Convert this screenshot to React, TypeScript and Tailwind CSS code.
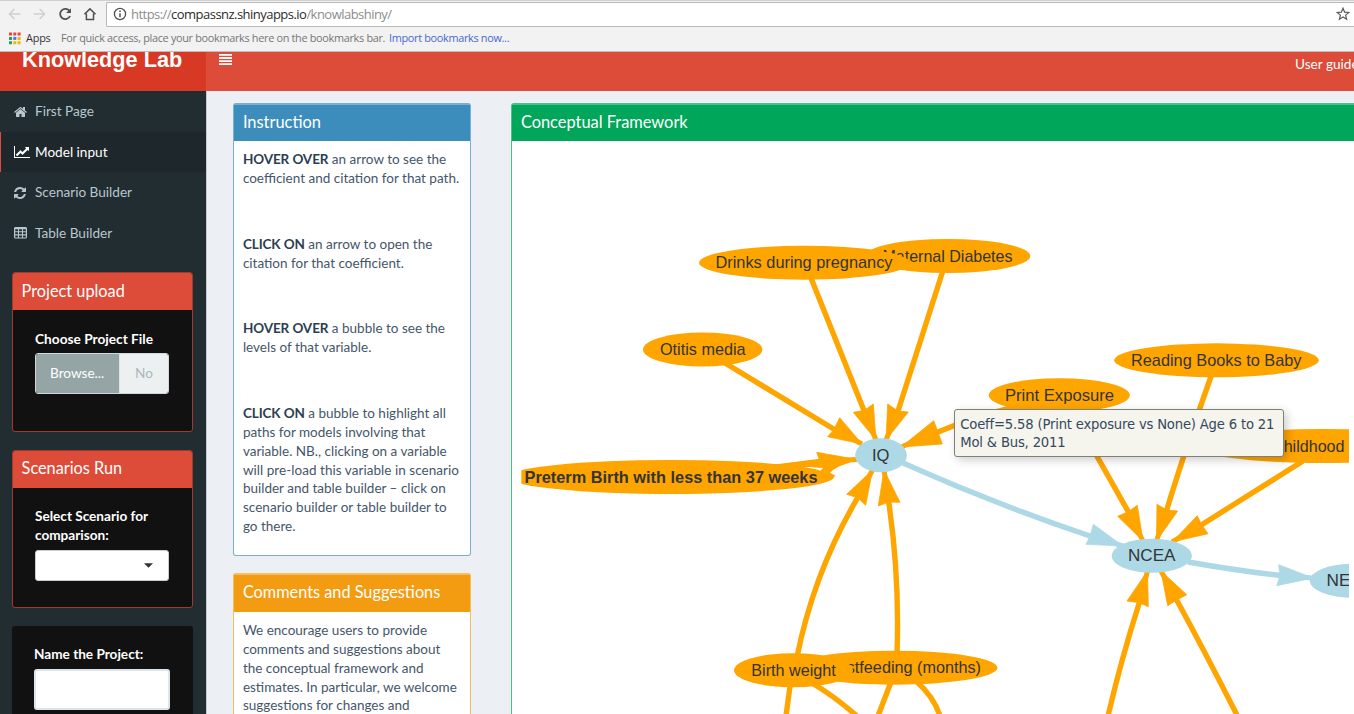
import React from "react";

type Pt = [number, number];

const ORANGE = "#ffa500";
const BLUE = "#add8e6";

const HOME =
  "M1408 992v480q0 26-19 45t-45 19h-384v-384h-256v384h-384q-26 0-45-19t-19-45v-480q0-1 .5-3t.5-3l575-474 575 474q1 2 1 6zm223-69l-62 74q-8 9-21 11h-3q-13 0-21-7l-692-577-692 577q-12 8-24 7-13-2-21-11l-62-74q-8-10-7-23.5t11-21.5l719-599q32-26 76-26t76 26l244 204v-195q0-14 9-23t23-9h192q14 0 23 9t9 23v408l219 182q10 8 11 21.5t-7 23.5z";
const CHART =
  "M2048 1536v128h-2048v-1536h128v1408h1920zm-128-1248v435q0 21-19.5 29.5t-35.5-7.5l-121-121-633 633q-10 10-23 10t-23-10l-233-233-416 416-192-192 585-585q10-10 23-10t23 10l233 233 464-464-121-121q-16-16-7.5-35.5t29.5-19.5h435q14 0 23 9t9 23z";
const REFRESH =
  "M1639 1056q0 5-1 7-64 268-268 434.5t-478 166.5q-146 0-282.5-55t-243.5-157l-129 129q-19 19-45 19t-45-19-19-45v-448q0-26 19-45t45-19h448q26 0 45 19t19 45-19 45l-137 137q71 66 161 102t187 36q134 0 250-65t186-179q11-17 53-117 8-23 30-23h192q13 0 22.5 9.5t9.5 22.5zm25-800v448q0 26-19 45t-45 19h-448q-26 0-45-19t-19-45 19-45l138-138q-148-137-349-137-134 0-250 65t-186 179q-11 17-53 117-8 23-30 23h-199q-13 0-22.5-9.5t-9.5-22.5v-7q65-268 270-434.5t480-166.5q146 0 284 55.5t245 156.5l130-129q19-19 45-19t45 19 19 45z";

function TableIcon() {
  return (
    <svg viewBox="0 0 13 12" className="h-[12px] w-[13px]" fill="none" stroke="currentColor">
      <rect x="0.6" y="0.6" width="11.8" height="10.4" rx="1" strokeWidth="1.2" />
      <path d="M0.6 1.4h11.8" strokeWidth="1.7" />
      <path d="M0.6 4.8h11.8M0.6 7.9h11.8M4.5 1v10M8.5 1v10" strokeWidth="1.1" />
    </svg>
  );
}

function NavItem({ icon, label, active }: { icon: React.ReactNode; label: string; active?: boolean }) {
  return (
    <li
      className={
        active
          ? "flex h-[40.5px] items-center border-l border-[#dd4b39] bg-[#1e282c] pt-[0.6px] pl-[13px] text-white"
          : "flex h-[40.5px] items-center border-l border-transparent pt-[0.6px] pl-[13px] text-[#b8c7ce]"
      }
    >
      <span className="flex w-[21px] items-center">{icon}</span>
      <span>{label}</span>
    </li>
  );
}

function Chrome() {
  return (
    <div className="h-[52px] shrink-0 border-b border-[#bdbdbd] bg-[#f2f2f2] font-['Open_Sans','Noto_Sans',sans-serif]">
      <div className="flex h-[26px] items-center border-t border-[#d0d0d0]">
        <svg viewBox="0 0 107 26" className="h-[26px] w-[106px] shrink-0" fill="none" strokeWidth="1.5">
          <path d="M20.5 13H9.5M14.5 8l-5 5 5 5M34 13h11M40 8l5 5-5 5" stroke="#cfcfcf" />
          <path d="M70.3 10.2a5.2 5.2 0 1 0 .4 4.8" stroke="#505050" strokeWidth="1.8" />
          <path d="M71.6 7.2v4.9h-4.9z" fill="#505050" />
          <path d="M85.2 13.2l5.6-5.4 5.6 5.4M87.2 12.4v6.1h7.2v-6.1" stroke="#505050" />
        </svg>
        <div className="mt-[1px] flex h-[25px] flex-1 items-center rounded-l-[2px] border border-r-0 border-[#b9b9b9] bg-white pl-[6px]">
          <svg viewBox="0 0 14 14" className="h-[14px] w-[14px]" fill="none" stroke="#505050">
            <circle cx="7" cy="7" r="5.6" strokeWidth="1.3" />
            <path d="M7 6.2v4.1M7 3.6v1.5" strokeWidth="1.5" />
          </svg>
          <span className="ml-[4px] whitespace-nowrap text-[13px] leading-[20px] tracking-[-0.53px] text-[#8c8c8c]">
            https://<span className="text-[#2b2b2b]">compassnz.shinyapps.io</span>/knowlabshiny/
          </span>
          <svg viewBox="0 0 14 14" className="mr-[4px] ml-auto h-[14px] w-[14px]" fill="none" stroke="#5a5a5a" strokeWidth="1.2">
            <path d="M7 1.2l1.6 3.9 4.2.3-3.2 2.7 1 4.1L7 10l-3.6 2.2 1-4.1L1.2 5.4l4.2-.3z" />
          </svg>
        </div>
      </div>
      <div className="flex h-[24px] items-center pl-[8px] text-[10.9px] tracking-[-0.32px]">
        <svg viewBox="0 0 13 13" className="h-[13px] w-[13px]">
          <path d="M1 0.5h3v3h-3zM5.3 0.5h3v3h-3zM9.6 0.5h3v3h-3z" fill="#e8453c" />
          <path d="M1 4.9h3v3h-3zM1 9.3h3v3h-3z" fill="#2aa055" />
          <path d="M5.3 4.9h3v3h-3z" fill="#3b7ded" />
          <path d="M9.6 4.9h3v3h-3zM5.3 9.3h3v3h-3zM9.6 9.3h3v3h-3z" fill="#f4b400" />
        </svg>
        <span className="ml-[5px] w-[35px] tracking-[-0.2px] text-[#333]">Apps</span>
        <span className="w-[328px] whitespace-nowrap text-[#757575]">
          For quick access, place your bookmarks here on the bookmarks bar.
        </span>
        <span className="whitespace-nowrap text-[#4668cf]">Import bookmarks now...</span>
      </div>
    </div>
  );
}

function Sidebar() {
  return (
    <aside className="w-[206px] shrink-0 bg-[#222d32] text-[13.6px] shadow-[1px_0_0_#c5cacc]">
      <ul className="h-[181px]">
        <NavItem
          label="First Page"
          icon={<svg viewBox="0 0 1792 1792" className="h-[14px] w-[14px]" fill="currentColor"><path d={HOME} /></svg>}
        />
        <NavItem
          active
          label="Model input"
          icon={<svg viewBox="0 0 2048 1792" className="h-[14px] w-[16px]" fill="currentColor"><path d={CHART} /></svg>}
        />
        <NavItem
          label="Scenario Builder"
          icon={<svg viewBox="128 0 1536 1792" className="h-[14px] w-[12px]" fill="currentColor"><path d={REFRESH} /></svg>}
        />
        <NavItem label="Table Builder" icon={<TableIcon />} />
      </ul>

      <div className="flex flex-col gap-[18px] pl-[12px]">
        <section className="h-[160px] w-[181px] overflow-hidden rounded-[3px] border border-[#a03a2f] bg-[#111]">
          <h3 className="h-[37px] bg-[#dd4b39] pl-[8.6px] text-[16.3px] leading-[35px] text-white">Project upload</h3>
          <div className="px-[22px] pt-[19px]">
            <div className="text-[13.7px] font-bold leading-[19px] whitespace-nowrap text-white">Choose Project File</div>
            <div className="mt-[5px] flex h-[41px] w-[134px] overflow-hidden rounded-[3px] border border-[#cfd8dc]">
              <div className="w-[83px] bg-[#95a5a6] pl-[14px] leading-[39px] text-white">Browse...</div>
              <div className="flex-1 border-l border-[#dce4ec] bg-[#ecf0f1] pl-[15px] leading-[39px] text-[#acb6c0]">No</div>
            </div>
          </div>
        </section>

        <section className="h-[158px] w-[181px] overflow-hidden rounded-[3px] border border-[#a03a2f] bg-[#111]">
          <h3 className="h-[37px] bg-[#dd4b39] pl-[8.6px] text-[16.3px] leading-[34px] text-white">Scenarios Run</h3>
          <div className="px-[22px] pt-[19px]">
            <div className="text-[13.6px] font-bold leading-[19px] whitespace-nowrap text-white">
              Select Scenario for
              <br />
              comparison:
            </div>
            <div className="mt-[4.5px] flex h-[31px] w-[134px] items-center justify-end rounded-[3px] border border-[#ccc] bg-white pr-[15px]">
              <svg viewBox="0 0 10 5" className="h-[5px] w-[9px]"><path d="M0 0h10l-5 5z" fill="#333" /></svg>
            </div>
          </div>
        </section>

        <section className="h-[120px] w-[181px] rounded-[3px] bg-[#111] px-[22px] pt-[19px]">
          <div className="text-[13.6px] font-bold leading-[19px] whitespace-nowrap text-white">Name the Project:</div>
          <div className="mt-[5px] h-[41px] w-[136px] rounded-[3px] border-2 border-[#dce4ec] bg-white" />
        </section>
      </div>
    </aside>
  );
}

function InfoColumn() {
  return (
    <div className="w-[237.6px] shrink-0 text-[13.5px] leading-[18.85px] text-[#45566a]">
      <section className="h-[453px] rounded-[3px] border border-t-2 border-[#79afd0] bg-white">
        <h3 className="h-[36px] bg-[#3c8dbc] pl-[8.6px] text-[16.4px] leading-[33px] text-white">Instruction</h3>
        <div className="pt-[9px] pl-[8.6px] whitespace-nowrap">
          <p>
            <b className="font-bold tracking-[-0.1px] text-[#2c3e50]">HOVER OVER</b> an arrow to see the
            <br />
            coefficient and citation for that path.
          </p>
          <p className="mt-[47px]">
            <b className="font-bold tracking-[-0.1px] text-[#2c3e50]">CLICK ON</b> an arrow to open the
            <br />
            citation for that coefficient.
          </p>
          <p className="mt-[47px]">
            <b className="font-bold tracking-[-0.1px] text-[#2c3e50]">HOVER OVER</b> a bubble to see the
            <br />
            levels of that variable.
          </p>
          <p className="mt-[47px]">
            <b className="font-bold tracking-[-0.1px] text-[#2c3e50]">CLICK ON</b> a bubble to highlight all
            <br />
            paths for models involving that
            <br />
            variable. NB., clicking on a variable
            <br />
            <span className="tracking-[0.04px]">will pre-load this variable in scenario</span>
            <br />
            builder and table builder – click on
            <br />
            <span className="tracking-[0.04px]">scenario builder or table builder to</span>
            <br />
            go there.
          </p>
        </div>
      </section>
      <section className="mt-[17px] h-[240px] rounded-[3px] border border-t-2 border-[#f6bd62] bg-white">
        <h3 className="h-[37px] bg-[#f39c12] pl-[8.6px] text-[16.3px] leading-[33px] text-white">Comments and Suggestions</h3>
        <p className="pt-[9px] pl-[8.6px] whitespace-nowrap">
          We encourage users to provide
          <br />
          comments and suggestions about
          <br />
          the conceptual framework and
          <br />
          estimates. In particular, we welcome
          <br />
          suggestions for changes and
        </p>
      </section>
    </div>
  );
}

interface Edge {
  d: string;
  a: Pt;
  n: Pt;
  b: Pt;
  t: Pt;
  color?: string;
}

const edges: Edge[] = [
  { d: "M811 278L864 410.5", a: [853.3, 412.3], n: [864, 410.5], b: [873.3, 404], t: [876, 440] },
  { d: "M942.5 272L898 411", a: [887.7, 404], n: [898, 411], b: [908.3, 412], t: [886, 440] },
  { d: "M725 363L834 429.3", a: [839.7, 417.7], n: [834, 429.3], b: [827.7, 436.7], t: [862, 444] },
  { d: "M1045 400Q985 412 938 432", a: [933.7, 420.7], n: [938, 432], b: [942.3, 444], t: [901, 447] },
  { d: "M780 467L825 461.5", a: [816.7, 452.3], n: [820, 461.5], b: [824, 471.5], t: [857, 459.5] },
  { d: "M797 657Q814 572 857.7 497.7", a: [846.7, 494.3], n: [857.7, 497.7], b: [865.7, 505.3], t: [872.5, 470] },
  { d: "M897 655Q899.8 577 888.7 502", a: [878.3, 506], n: [888.7, 502], b: [900, 502.3], t: [884, 470] },
  { d: "M903 463Q995 504 1090 536", a: [1093.3, 524.3], n: [1090, 536], b: [1086, 544.3], t: [1123, 546], color: BLUE },
  { d: "M1188 562Q1240 571 1280 575.5", a: [1278.7, 564.7], n: [1280, 575.5], b: [1276.7, 585.7], t: [1313, 578], color: BLUE },
  { d: "M1068 405L1128.3 511.7", a: [1137.3, 505.3], n: [1128.3, 511.7], b: [1117.7, 516.3], t: [1143, 541] },
  { d: "M1211.5 375Q1185 450 1166.7 510", a: [1157, 504.3], n: [1166.7, 510], b: [1177.7, 511], t: [1156.5, 541] },
  { d: "M1303 461L1201.7 524.7", a: [1197.3, 515.7], n: [1201.7, 524.7], b: [1208, 533.7], t: [1172, 542] },
  { d: "M1108 716Q1121 660 1139.3 602.7", a: [1127, 601], n: [1139.3, 602.7], b: [1148.3, 606.7], t: [1147.5, 571] },
  { d: "M1237.5 716Q1205 652 1176.7 600", a: [1167.7, 605.7], n: [1176.7, 600], b: [1186.7, 594.7], t: [1161, 571] },
];

interface Bubble {
  cx: number;
  cy: number;
  rx: number;
  label: string;
  x: number;
  w: number;
  bold?: boolean;
  color?: string;
}

const bubbles: Bubble[] = [
  { cx: 947.8, cy: 256, rx: 82.5, label: "Maternal Diabetes", x: 882.5, w: 130 },
  { cx: 804.5, cy: 262.7, rx: 105.5, label: "Drinks during pregnancy", x: 715.5, w: 177 },
  { cx: 702.7, cy: 349.5, rx: 59.7, label: "Otitis media", x: 660, w: 85.5 },
  { cx: 671, cy: 477, rx: 163, label: "Preterm Birth with less than 37 weeks", x: 524.5, w: 293, bold: true },
  { cx: 1059.3, cy: 395.3, rx: 70.5, label: "Print Exposure", x: 1005, w: 109 },
  { cx: 1216.5, cy: 360.3, rx: 102.3, label: "Reading Books to Baby", x: 1131, w: 170.5 },
  { cx: 1323, cy: 446, rx: 130, label: "Childhood", x: 1272, w: 72.5 },
  { cx: 894.5, cy: 667.7, rx: 103, label: "Breastfeeding (months)", x: 812.5, w: 168.5 },
  { cx: 793.5, cy: 670.3, rx: 59.5, label: "Birth weight", x: 751.3, w: 84.5 },
  { cx: 881, cy: 455.2, rx: 25.8, label: "IQ", x: 872, w: 17.5, color: BLUE },
  { cx: 1151.8, cy: 555.7, rx: 40.2, label: "NCEA", x: 1128, w: 47.5, color: BLUE },
  { cx: 1353, cy: 580.7, rx: 43.3, label: "NEET", x: 1326.5, w: 46, color: BLUE },
];

function Diagram() {
  return (
    <svg viewBox="512 141 842 573" className="block h-[573px] w-[842px]">
      <clipPath id="canvas">
        <rect x="521.3" y="141" width="827.7" height="573" />
      </clipPath>
      <g clipPath="url(#canvas)">
        <g fill="none" stroke={ORANGE} strokeWidth="5.4">
          <path d="M790.3 684L786 716" />
          <path d="M812 683Q834 696 857 716" />
          <path d="M891 682L878 716" />
          <path d="M916 681Q934 697 940 716" />
        </g>
        {edges.map((e, i) => (
          <g key={i} stroke={e.color ?? ORANGE} fill={e.color ?? ORANGE}>
            <path d={e.d} fill="none" strokeWidth="5.4" />
            <path d={`M${e.n}L${e.t}`} strokeWidth="5" />
            <path d={`M${e.a}L${e.n}L${e.b}L${e.t}Z`} strokeWidth="0.8" />
          </g>
        ))}
        {bubbles.map((b) => (
          <g key={b.label}>
            <ellipse cx={b.cx} cy={b.cy} rx={b.rx} ry={17} fill={b.color ?? ORANGE} />
            <text
              x={b.x}
              y={b.cy + 5.5}
              textLength={b.w}
              lengthAdjust="spacingAndGlyphs"
              fill="#343434"
              className={
                b.bold
                  ? "font-['Liberation_Sans',sans-serif] text-[17px] font-bold"
                  : "font-['Liberation_Sans',sans-serif] text-[17px]"
              }
            >
              {b.label}
            </text>
          </g>
        ))}
        <path
          d="M760 463L775 464.5L818 459L840 462L838 467L833 470L830 472.7L835.5 475.7L827 481.7L819 483V472L822 468L810 467L760 468Z"
          fill={ORANGE}
        />
        <path d="M815.3 468.8L823 467.8L820.5 470.8Z" fill="#fff" />
      </g>
    </svg>
  );
}

export default function App() {
  return (
    <div className="flex h-[714px] w-[1354px] flex-col overflow-hidden bg-[#ecf0f5] font-['Lato',sans-serif]">
      <Chrome />
      <header className="flex h-[39px] shrink-0 overflow-hidden bg-[#dd4b39] text-white">
        <div className="w-[206px] shrink-0 bg-[#d73925] pl-[22px] font-['Liberation_Sans',sans-serif] text-[21.7px] leading-[15px] font-bold whitespace-nowrap">
          Knowledge Lab
        </div>
        <svg viewBox="0 0 13 12" className="mt-[2px] ml-[13px] h-[12px] w-[13px]" fill="white">
          <path d="M0 0h13v1.8H0zM0 3.1h13v1.8H0zM0 6.2h13v1.8H0zM0 9.3h13v1.8H0z" />
        </svg>
        <span className="ml-auto w-[59px] overflow-hidden text-[13.6px] leading-[24px] whitespace-nowrap">User guide</span>
      </header>
      <div className="flex h-[623px]">
        <Sidebar />
        <main className="flex flex-1 gap-[40.4px] overflow-hidden pt-[12px] pl-[27.3px]">
          <InfoColumn />
          <section className="h-[640px] w-[860px] shrink-0 rounded-tl-[3px] border-t-2 border-l border-[#4cc08c] bg-white">
            <h3 className="h-[36px] bg-[#00a65a] pl-[8.6px] text-[16.4px] leading-[33px] text-white">Conceptual Framework</h3>
            <div className="relative">
              <Diagram />
              <div className="absolute top-[268px] left-[442px] h-[48px] w-[330px] rounded-[3px] border border-[#808074] bg-[#f5f4ed] pt-[6px] pl-[5px] font-['DejaVu_Sans',sans-serif] text-[13.2px] leading-[18px] tracking-[-0.19px] whitespace-nowrap text-[#34495e] shadow-[3px_3px_10px_rgba(0,0,0,0.2)]">
                Coeff=5.58 (Print exposure vs None) Age 6 to 21
                <br />
                Mol &amp; Bus, 2011
              </div>
            </div>
          </section>
        </main>
      </div>
    </div>
  );
}
